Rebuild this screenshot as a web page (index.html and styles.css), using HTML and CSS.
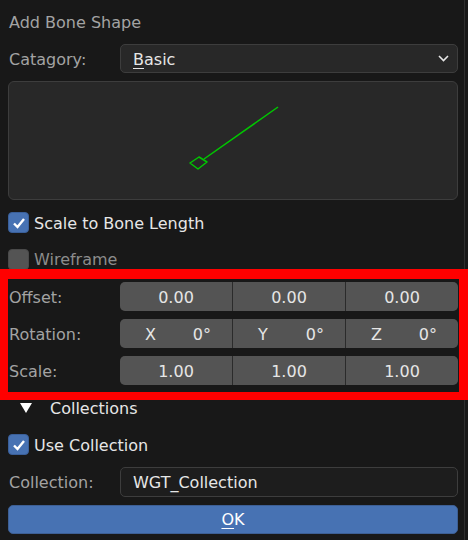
FILE: index.html
```html
<!DOCTYPE html>
<html>
<head>
<meta charset="utf-8">
<link rel="stylesheet" href="styles.css">
</head>
<body>
<div class="panel">
  <div class="title">Add Bone Shape</div>

  <div class="row row-cat">
    <div class="label">Catagory:</div>
    <div class="dropdown">
      <span class="value"><u>B</u>asic</span>
      <svg class="chev" width="11" height="7" viewBox="0 0 11 7"><path d="M1 1 L5.5 5.5 L10 1" fill="none" stroke="#e6e6e6" stroke-width="1.6"/></svg>
    </div>
  </div>

  <div class="preview">
    <svg class="shape" width="450" height="119" viewBox="0 0 450 119">
      <g fill="none" stroke="#00c800" stroke-width="1.5" stroke-linejoin="round">
        <path d="M196 78 L270 26"/>
        <path d="M182 82 L191 76 L199 81 L190 88 Z"/>
      </g>
    </svg>
  </div>

  <div class="check cb-first">
    <span class="box on"><svg width="14" height="12" viewBox="0 0 14 12"><path d="M2 6.5 L5.5 10 L12 2" fill="none" stroke="#fff" stroke-width="2.4"/></svg></span>
    <span class="ctext">Scale to Bone Length</span>
  </div>

  <div class="check cb-second">
    <span class="box off"></span>
    <span class="ctext dim">Wireframe</span>
  </div>

  <div class="highlight">
    <div class="row vrow">
      <div class="label">Offset:</div>
      <div class="vec">
        <div class="seg">0.00</div>
        <div class="seg">0.00</div>
        <div class="seg">0.00</div>
      </div>
    </div>
    <div class="row vrow">
      <div class="label">Rotation:</div>
      <div class="vec">
        <div class="seg split"><span>X</span><span>0°</span></div>
        <div class="seg split"><span>Y</span><span>0°</span></div>
        <div class="seg split"><span>Z</span><span>0°</span></div>
      </div>
    </div>
    <div class="row vrow">
      <div class="label">Scale:</div>
      <div class="vec">
        <div class="seg">1.00</div>
        <div class="seg">1.00</div>
        <div class="seg">1.00</div>
      </div>
    </div>
  </div>

  <div class="section">
    <svg class="tri" width="12" height="10" viewBox="0 0 12 10"><path d="M0 0 L12 0 L6 10 Z" fill="#ffffff"/></svg>
    <span class="stext">Collections</span>
  </div>

  <div class="check cb-third">
    <span class="box on"><svg width="14" height="12" viewBox="0 0 14 12"><path d="M2 6.5 L5.5 10 L12 2" fill="none" stroke="#fff" stroke-width="2.4"/></svg></span>
    <span class="ctext">Use Collection</span>
  </div>

  <div class="row row-col">
    <div class="label">Collection:</div>
    <div class="textfield">WGT_Collection</div>
  </div>

  <div class="ok"><u>O</u>K</div>
</div>
</body>
</html>
```

FILE: styles.css
```css
html, body {
  margin: 0;
  padding: 0;
  background: #181818;
}
body {
  width: 468px;
  height: 540px;
  overflow: hidden;
  font-family: "DejaVu Sans", sans-serif;
  font-size: 16px;
  color: #e6e6e6;
}
.panel {
  width: 465px;
  height: 540px;
  box-sizing: border-box;
  border-right: 1px solid #2e2e2e;
  display: flex;
  flex-direction: column;
}
.title {
  margin: 8px 0 0 9px;
  height: 29px;
  line-height: 30px;
  color: #a3a3a3;
}
.row {
  display: flex;
  align-items: center;
  margin-left: 8px;
  width: 450px;
}
.label {
  width: 112px;
  padding: 2px 0 0 1px;
  box-sizing: border-box;
  color: #a3a3a3;
}
.row-cat {
  margin-top: 7px;
  height: 29px;
}
.dropdown {
  flex: 1;
  height: 29px;
  box-sizing: border-box;
  background: #282828;
  border: 1px solid #3d3d3d;
  border-radius: 5px;
  display: flex;
  align-items: center;
  justify-content: space-between;
  padding: 0 8px 0 12px;
}
.value {
  padding-top: 2px;
}
.dropdown u, .ok u {
  text-decoration-thickness: 1px;
  text-underline-offset: 3px;
}
.chev {
  display: block;
}
.preview {
  margin: 8px 0 0 8px;
  width: 450px;
  height: 119px;
  box-sizing: border-box;
  background: #282828;
  border: 1px solid #3d3d3d;
  border-radius: 6px;
  overflow: hidden;
}
.shape {
  display: block;
  margin: -1px;
}
.check {
  display: flex;
  align-items: center;
  margin-left: 8px;
  height: 21px;
}
.cb-first { margin-top: 12px; }
.cb-second {
  margin-top: 16px;
  height: 20px;
  align-items: flex-start;
}
.cb-second .ctext { padding-top: 1px; }
.cb-third { margin-top: 18px; }
.box {
  width: 21px;
  height: 21px;
  flex: none;
  box-sizing: border-box;
  border-radius: 4px;
  display: flex;
  align-items: center;
  justify-content: center;
  border: 1px solid #3a3a3a;
}
.box.on { background: #4772b3; border-color: #3a5f99; }
.box.off { background: #545454; border-color: #4a4a4a; }
.ctext {
  margin-left: 5px;
  padding-top: 2px;
  color: #e6e6e6;
}
.ctext.dim { color: #8c8c8c; }
.highlight {
  margin-top: 0;
  width: 468px;
  box-sizing: border-box;
  border-style: solid;
  border-color: #ff0000;
  border-width: 10px 9px 8px 8px;
  padding: 3px 0 7px 0;
  display: flex;
  flex-direction: column;
  gap: 8px;
  background: #181818;
}
.highlight .row {
  margin-left: 0;
}
.vrow { height: 29px; }
.vec {
  flex: 1;
  height: 29px;
  display: flex;
  gap: 1px;
  background: #2b2b2b;
  border-radius: 5px;
  overflow: hidden;
}
.seg {
  flex: 1;
  background: #545454;
  display: flex;
  align-items: center;
  justify-content: center;
  padding-top: 2px;
  box-sizing: border-box;
  color: #e6e6e6;
}
.seg.split {
  justify-content: space-between;
  padding: 2px 21px 0 25px;
}
.section {
  display: flex;
  align-items: center;
  height: 16px;
  margin-top: 0;
}
.tri {
  display: block;
  margin-left: 20px;
}
.stext {
  margin-left: 18px;
  color: #e6e6e6;
}
.row-col {
  margin-top: 12px;
  height: 30px;
}
.row-col .label {
  padding-top: 0;
}
.textfield {
  flex: 1;
  height: 30px;
  box-sizing: border-box;
  background: #1d1d1d;
  border: 1px solid #3d3d3d;
  border-radius: 5px;
  display: flex;
  align-items: center;
  padding-left: 12px;
  color: #e6e6e6;
}
.ok {
  margin: 8px 0 0 8px;
  width: 450px;
  height: 29px;
  box-sizing: border-box;
  background: #4772b3;
  border: 1px solid #3d5f94;
  border-radius: 5px;
  display: flex;
  align-items: center;
  justify-content: center;
  color: #ffffff;
}
```
